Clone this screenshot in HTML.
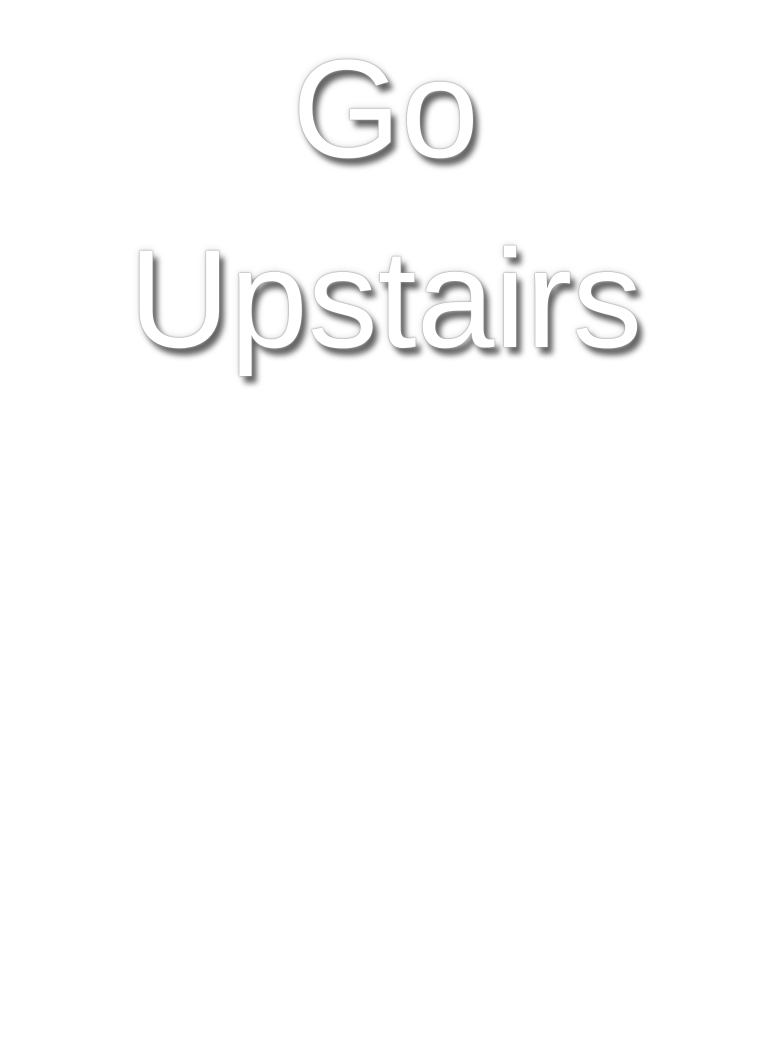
<!DOCTYPE html>
<html>
<head>
<meta charset="utf-8">
<style>
html,body{margin:0;padding:0;background:#fff;width:771px;height:1041px;overflow:hidden;}
h1{
  margin:0;
  padding-top:14px;
  font-family:"Liberation Sans",sans-serif;
  font-weight:normal;
  font-size:140px;
  line-height:190px;
  text-align:center;
  color:#fff;
  text-shadow:0 0 1px #888, 0 0 2px #aaa, 5px 7px 6px rgba(0,0,0,0.6), 0 0 8px rgba(0,0,0,0.15);
}
</style>
</head>
<body>
<h1>Go<br>Upstairs</h1>
</body>
</html>
